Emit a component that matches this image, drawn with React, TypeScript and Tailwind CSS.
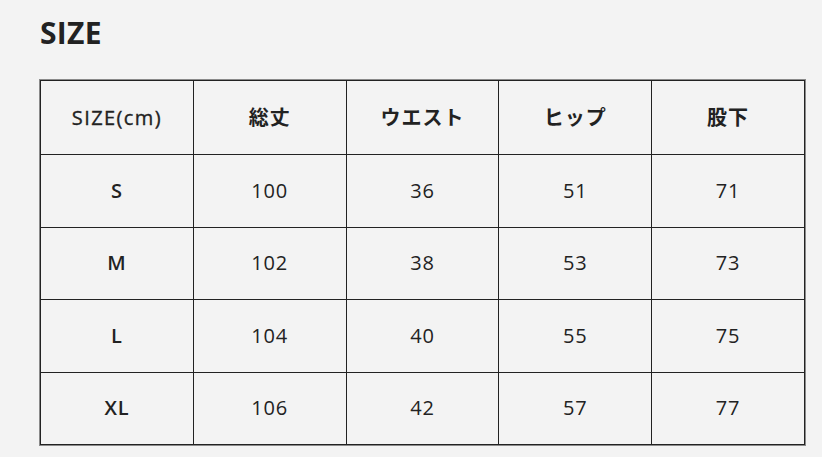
const headers = ["SIZE(cm)", "総丈", "ウエスト", "ヒップ", "股下"];
const rows = [
  ["S", "100", "36", "51", "71"],
  ["M", "102", "38", "53", "73"],
  ["L", "104", "40", "55", "75"],
  ["XL", "106", "42", "57", "77"],
];

export default function App() {
  return (
    <div
      className="w-[822px] h-[457px] bg-[#f3f3f3] text-[#222222] pl-[39px] pt-[13px]"
      style={{ fontFamily: '"Open Sans", "Noto Sans CJK JP", sans-serif' }}
    >
      <h1 className="text-[30px] font-bold leading-[40px] ml-[1px] tracking-[0.01em]">SIZE</h1>
      <div className="mt-[26px] w-[767px] border border-[#8a8a8a]">
        <table className="w-full border-collapse table-fixed">
          <thead>
            <tr className="h-[74px]">
              {headers.map((h, i) => (
                <th
                  key={i}
                  className={`border border-[#222222] text-[20px] text-center p-0 ${
                    i === 0
                      ? "font-normal tracking-[0.07em] [-webkit-text-stroke:0.35px_#222222]"
                      : "font-bold tracking-[0.05em]"
                  }`}
                >
                  {h}
                </th>
              ))}
            </tr>
          </thead>
          <tbody>
            {rows.map((r, ri) => (
              <tr key={ri} className="h-[72.5px]">
                {r.map((c, ci) => (
                  <td
                    key={ci}
                    className={`border border-[#222222] text-[20px] tracking-[0.04em] text-center p-0 ${
                      ci === 0 ? "font-semibold" : "font-normal"
                    }`}
                  >
                    {c}
                  </td>
                ))}
              </tr>
            ))}
          </tbody>
        </table>
      </div>
    </div>
  );
}
